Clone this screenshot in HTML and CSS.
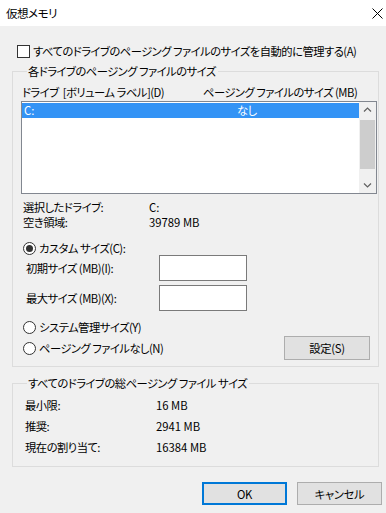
FILE: index.html
```html
<!DOCTYPE html>
<html lang="ja">

<head>
  <meta charset="UTF-8">
  <meta name="viewport" content="width=device-width, initial-scale=1.0">
  <title>仮想メモリ</title>
  <link rel="stylesheet" href="styles.css">
</head>

<body>
  <div class="titlebar">
    <span class="title">仮想メモリ</span>
    <svg class="close" width="11" height="11" viewBox="0 0 11 11">
      <path d="M0.5 0.5 L10.5 10.5 M10.5 0.5 L0.5 10.5" stroke="#000" stroke-width="1" fill="none"/>
    </svg>
  </div>

  <div class="dialog">
    <label class="check-row">
      <span class="checkbox"></span>
      <span>すべてのドライブのページング ファイルのサイズを自動的に管理する(A)</span>
    </label>

    <fieldset class="group group-drive">
      <legend>各ドライブのページング ファイルのサイズ</legend>
      <div class="list-head">
        <span class="col-drive">ドライブ&nbsp;&nbsp;[ボリューム ラベル](D)</span>
        <span class="col-size">ページング ファイルのサイズ (MB)</span>
      </div>
      <div class="listbox">
        <div class="list-rows">
          <div class="list-row selected">
            <span class="col-drive value">C:</span>
            <span class="col-none">なし</span>
          </div>
        </div>
        <div class="scrollbar">
          <svg class="arrow" width="17" height="16" viewBox="0 0 17 16">
            <path d="M5 9.5 L8.5 6 L12 9.5" stroke="#606060" stroke-width="1.2" fill="none"/>
          </svg>
          <div class="track"><div class="thumb"></div></div>
          <svg class="arrow" width="17" height="16" viewBox="0 0 17 16">
            <path d="M5 6.5 L8.5 10 L12 6.5" stroke="#606060" stroke-width="1.2" fill="none"/>
          </svg>
        </div>
      </div>

      <div class="info">
        <div class="info-row"><span class="info-label">選択したドライブ:</span><span class="value">C:</span></div>
        <div class="info-row"><span class="info-label">空き領域:</span><span class="value">39789 MB</span></div>
      </div>

      <label class="radio-row custom">
        <span class="radio checked"></span>
        <span>カスタム サイズ(C):</span>
      </label>
      <div class="size-row first">
        <span class="size-label">初期サイズ (MB)(I):</span>
        <input class="size-input" type="text">
      </div>
      <div class="size-row">
        <span class="size-label">最大サイズ (MB)(X):</span>
        <input class="size-input" type="text">
      </div>
      <label class="radio-row system">
        <span class="radio"></span>
        <span>システム管理サイズ(Y)</span>
      </label>
      <div class="last-row">
        <label class="radio-row">
          <span class="radio"></span>
          <span>ページング ファイルなし(N)</span>
        </label>
        <button class="btn btn-set">設定(S)</button>
      </div>
    </fieldset>

    <fieldset class="group group-total">
      <legend>すべてのドライブの総ページング ファイル サイズ</legend>
      <div class="total-row"><span class="total-label">最小限:</span><span class="value">16 MB</span></div>
      <div class="total-row"><span class="total-label">推奨:</span><span class="value">2941 MB</span></div>
      <div class="total-row"><span class="total-label">現在の割り当て:</span><span class="value">16384 MB</span></div>
    </fieldset>

    <div class="actions">
      <button class="btn btn-ok">OK</button>
      <button class="btn">キャンセル</button>
    </div>
  </div>
</body>

</html>
```

FILE: styles.css
```css
* {
  margin: 0;
  padding: 0;
  box-sizing: border-box;
}

body {
  width: 386px;
  height: 513px;
  overflow: hidden;
  background: #f0f0f0;
  color: #000;
  font-family: 'Noto Sans CJK JP', 'Noto Sans', sans-serif;
  font-size: 11.3px;
  line-height: 14px;
  letter-spacing: -0.5px;
  font-feature-settings: 'palt';
  white-space: nowrap;
}

/* latin values keep their natural width */
.value {
  letter-spacing: 0;
}

.titlebar {
  height: 26px;
  background: #fff;
  display: flex;
  align-items: center;
  justify-content: space-between;
  padding: 0 2px 0 6px;
}

.title {
  font-size: 11.5px;
}

.close {
  margin-right: 1px;
}

.dialog {
  display: flex;
  flex-direction: column;
}

.check-row {
  display: flex;
  align-items: center;
  height: 14px;
  margin: 18px 0 0 17px;
}

.checkbox {
  width: 13px;
  height: 13px;
  border: 1px solid #333;
  background: #fff;
  margin-right: 3px;
}

/* group boxes */
.group {
  margin: 5px 7px 0 12px;
  border: 1px solid #dcdcdc;
  padding: 0 1px 6px 8px;
}

.group legend {
  line-height: 16px;
  padding: 0 2px 0 1px;
  margin-left: 6px;
}

.list-head {
  display: flex;
  height: 14px;
  margin-top: 6px;
  padding-left: 1px;
}

.col-drive {
  width: 181px;
}

.listbox {
  display: flex;
  height: 93px;
  margin-top: 2px;
  border: 1px solid #828790;
  background: #fff;
}

.list-rows {
  flex: 1;
  padding-top: 1px;
}

.list-row {
  display: flex;
  height: 15px;
  line-height: 15px;
}

.list-row.selected {
  background: #3393f5;
  color: #fff;
}

.list-row .col-drive {
  width: 215px;
  padding-left: 2px;
}

.scrollbar {
  width: 17px;
  display: flex;
  flex-direction: column;
  background: #f0f0f0;
}

.arrow {
  display: block;
}

.track {
  flex: 1;
  padding: 2px 1px;
}

.thumb {
  height: 49px;
  background: #cdcdcd;
}

.info {
  margin-top: 6px;
}

.info-row {
  display: flex;
  height: 15px;
  line-height: 15px;
  padding-left: 2px;
}

.info-label {
  width: 126px;
}

.radio-row {
  display: flex;
  align-items: center;
  height: 14px;
}

.radio-row.custom {
  margin: 11px 0 0 2px;
}

.radio-row.system {
  margin: 9px 0 0 2px;
}

.radio {
  width: 13px;
  height: 13px;
  border: 1px solid #333;
  border-radius: 50%;
  background: #fff;
  margin-right: 3px;
  display: flex;
  align-items: center;
  justify-content: center;
}

.radio.checked::after {
  content: '';
  width: 7px;
  height: 7px;
  border-radius: 50%;
  background: #333;
}

.size-row {
  display: flex;
  align-items: center;
  height: 26px;
  margin-top: 4px;
  padding-left: 5px;
}

.size-row.first {
  margin-top: 0;
}

.size-label {
  width: 133px;
}

.size-input {
  width: 88px;
  height: 26px;
  border: 1px solid #7a7a7a;
  background: #fff;
  outline: none;
}

.last-row {
  display: flex;
  align-items: center;
  justify-content: space-between;
  height: 24px;
  margin-top: 2px;
  padding-left: 2px;
}

.btn {
  width: 85px;
  height: 23px;
  border: 1px solid #adadad;
  background: #e1e1e1;
  font-family: inherit;
  font-size: 11.3px;
  letter-spacing: -0.3px;
  font-feature-settings: 'palt';
  color: #000;
}

.btn-set {
  width: 86px;
  height: 24px;
  margin-right: 7px;
}

.group-total {
  margin-top: 8px;
  padding-bottom: 8px;
}

.total-row {
  display: flex;
  height: 21px;
  line-height: 21px;
  padding-left: 4px;
}

.group-total .total-row:first-of-type {
  margin-top: 4px;
}

.total-label {
  width: 131px;
}

.actions {
  display: flex;
  justify-content: flex-end;
  gap: 10px;
  margin-top: 15px;
  padding-right: 4px;
}

.btn-ok {
  border: 2px solid #0078d7;
}
```
